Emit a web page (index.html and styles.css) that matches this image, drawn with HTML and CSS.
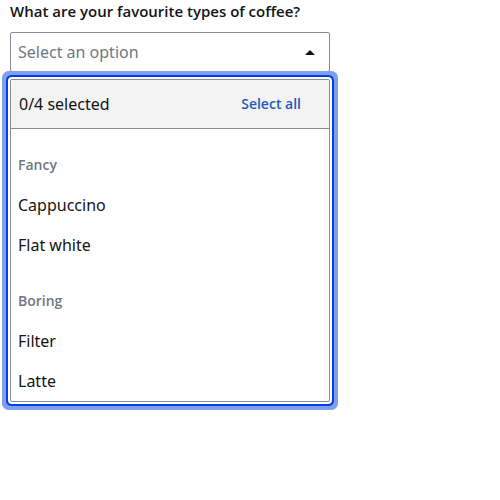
FILE: index.html
```html
<!DOCTYPE html>
<html lang="en">
<head>
<meta charset="utf-8">
<meta name="viewport" content="width=device-width, initial-scale=1">
<title>Coffee types</title>
<link rel="stylesheet" href="styles.css">
</head>
<body>
<div class="field">
  <label class="label" for="coffee">What are your favourite types of coffee?</label>
  <div class="control">
    <input class="input" id="coffee" type="text" role="combobox" aria-expanded="true" aria-controls="coffee-menu" placeholder="Select an option" readonly>
    <svg class="arrow" viewBox="0 0 10 5" aria-hidden="true"><path d="M0 5 L5 0 L10 5Z"/></svg>
  </div>
  <div class="menu" id="coffee-menu">
    <div class="summary">
      <span>0/4 selected</span>
      <button class="select-all" type="button">Select all</button>
    </div>
    <div role="listbox" aria-labelledby="coffee" aria-multiselectable="true">
      <ul class="group" role="group" aria-labelledby="fancy">
        <li class="group-title" id="fancy" role="presentation">Fancy</li>
        <li class="option" role="option" aria-selected="false">Cappuccino</li>
        <li class="option" role="option" aria-selected="false">Flat white</li>
      </ul>
      <ul class="group" role="group" aria-labelledby="boring">
        <li class="group-title" id="boring" role="presentation">Boring</li>
        <li class="option" role="option" aria-selected="false">Filter</li>
        <li class="option" role="option" aria-selected="false">Latte</li>
      </ul>
    </div>
  </div>
</div>
</body>
</html>
```
FILE: styles.css
```css
* {
  box-sizing: border-box;
}

body {
  min-height: 100vh;
  margin: 0;
  padding: 0 10px 16px;
  background: #fff;
  color: #141414;
  font: 400 16px/24px "Noto Sans", "Open Sans", sans-serif;
}

.field {
  max-width: 320px;
}

.label {
  display: block;
  padding-bottom: 10px;
  font-family: "Open Sans", "Noto Sans", sans-serif;
  font-size: 15px;
  font-weight: 600;
  line-height: 22px;
}

.control {
  display: flex;
  align-items: center;
  height: 40px;
  padding: 0 14px 0 7px;
  border: 1px solid #858b9a;
  border-radius: 2px;
}

.input {
  flex: 1;
  min-width: 0;
  padding: 0;
  border: 0;
  outline: 0;
  background: none;
  color: inherit;
  font: inherit;
}

.input::placeholder {
  color: #717882;
  opacity: 1;
}

.arrow {
  width: 10px;
  height: 5px;
  fill: #141414;
}

.menu {
  position: relative;
  margin-top: 7px;
  border: 1px solid #858b9a;
  border-radius: 2px;
  background: #fff;
  box-shadow: 0 0 0 2px #fff, 0 0 0 4px #0040dd, 0 0 0 8px #809fee;
}

.summary {
  display: flex;
  align-items: center;
  justify-content: space-between;
  padding: 12px 28px 12px 8px;
  border-bottom: 1px solid #858b9a;
  background: #f3f3f3;
}

.select-all {
  padding: 0;
  border: 0;
  background: none;
  color: #1d5bbf;
  font-family: "Open Sans", "Noto Sans", sans-serif;
  font-size: 14px;
  font-weight: 600;
  line-height: 24px;
}

.group {
  margin: 0;
  padding: 16px 7px 0;
  list-style: none;
}

.group-title,
.option {
  padding: 8px 0;
}

.group-title {
  color: #717882;
  font-family: "Open Sans", "Noto Sans", sans-serif;
  font-size: 14px;
  font-weight: 600;
}
```
